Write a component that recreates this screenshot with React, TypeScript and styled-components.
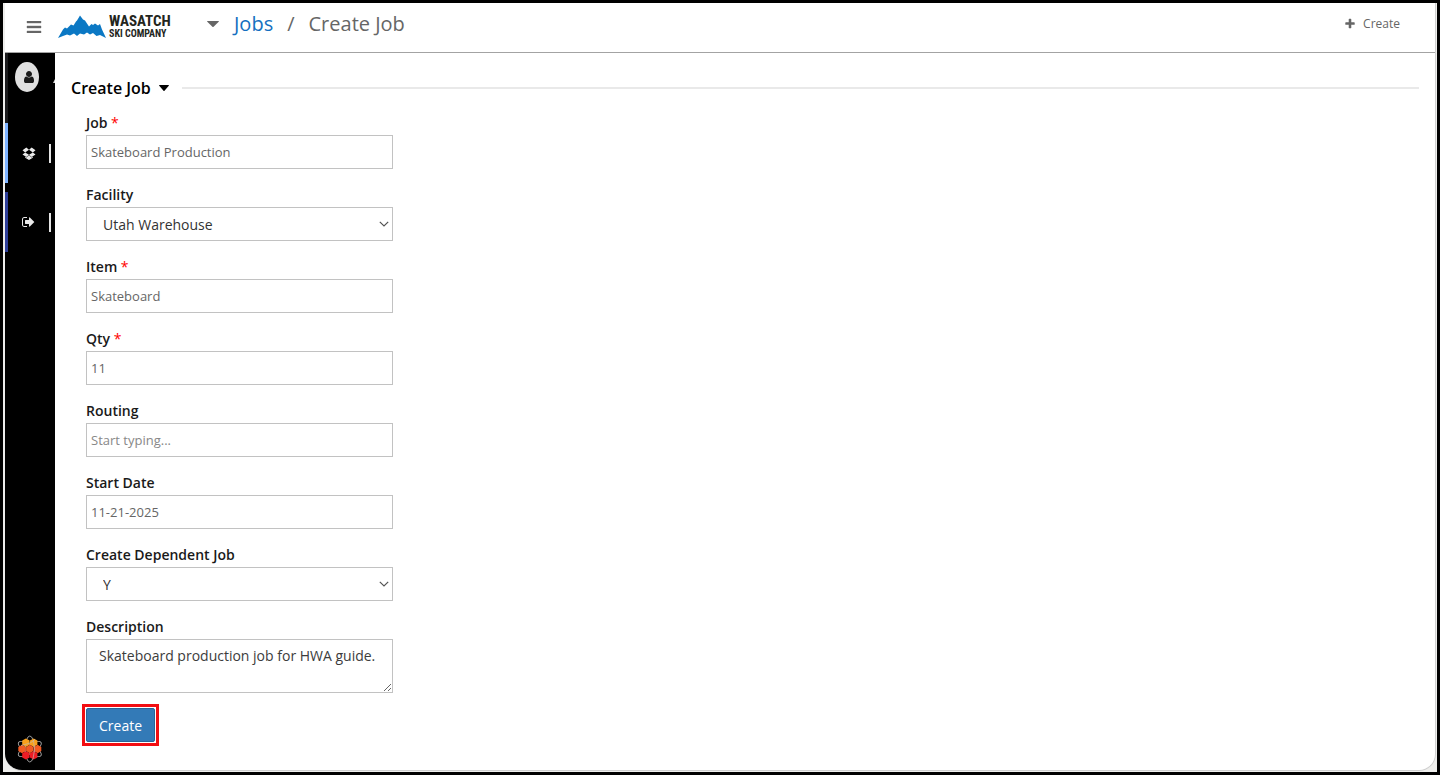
import React from "react";
import styled, { createGlobalStyle, css } from "styled-components";

const GlobalStyle = createGlobalStyle`
  *, *::before, *::after { box-sizing: border-box; }
  body {
    margin: 0;
    background: #000;
    color: #1a1a1a;
    font-family: "Open Sans", "Noto Sans", sans-serif;
    font-size: 14px;
    line-height: 20px;
  }
  button, input, select, textarea { font-family: inherit; }
`;

const Frame = styled.div`
  display: flex;
  min-height: 100vh;
  border: 3px solid #000;
  padding: 0 1px 1px 2px;
  background: #eeeeec;
`;

const Window = styled.div`
  flex: 1;
  min-width: 0;
  display: flex;
  flex-direction: column;
  overflow: hidden;
  background: #fff;
  border: solid #cfcfcf;
  border-width: 0 1px 1px 0;
  border-radius: 0 0 17px 17px;
`;

const Header = styled.header`
  display: flex;
  align-items: center;
  height: 50px;
  padding: 0 35px 7px 21px;
  border-bottom: 1px solid #a3a3a3;
`;

const IconButton = styled.button`
  display: flex;
  align-items: center;
  gap: 7px;
  padding: 0;
  border: 0;
  background: none;
  color: #666;
  font-size: 12px;
  line-height: 20px;
  cursor: pointer;
`;

const MenuButton = styled(IconButton)`
  padding-top: 6px;
`;

const Brand = styled.a`
  display: flex;
  align-items: center;
  gap: 3px;
  width: 111px;
  margin-left: 16px;
  padding-top: 4px;
  color: #23251c;
  text-decoration: none;

  svg { flex: none; }
`;

const BrandName = styled.span`
  display: flex;
  flex-direction: column;
  font-family: "Roboto Condensed", Roboto, sans-serif;
  font-weight: 700;
  white-space: nowrap;
`;

const BrandTop = styled.span`
  font-size: 15px;
  line-height: 14px;
`;

const BrandBottom = styled.span`
  font-size: 10px;
  line-height: 11px;
`;

const Breadcrumb = styled.nav`
  display: flex;
  align-items: center;
  gap: 14px;
  margin-left: 38px;
  color: #666;
  font-size: 20px;
  line-height: 28px;

  a {
    margin-left: 1px;
    color: #146fc0;
    text-decoration: none;
  }
`;

const HeaderActions = styled.div`
  margin-left: auto;
`;

const Body = styled.div`
  flex: 1;
  display: flex;
`;

const Sidebar = styled.aside`
  display: flex;
  flex-direction: column;
  flex: none;
  width: 50px;
  background: #000;
  color: #e9e9e9;
`;

const Profile = styled.a`
  position: relative;
  display: flex;
  align-items: flex-start;
  height: 70px;
  padding: 9px 0 0 7px;
  border-left: 3px solid #1b1b1d;
`;

const Avatar = styled.span`
  display: flex;
  align-items: center;
  justify-content: center;
  width: 24px;
  height: 30px;
  padding-left: 3px;
  border-radius: 50%;
  background: #e0e0e0;
  color: #1b1b1b;
`;

const ProfileEdge = styled.svg`
  position: absolute;
  right: 0;
  top: 26px;
`;

const SideLink = styled.a<{ $accent: string }>`
  display: flex;
  align-items: center;
  justify-content: space-between;
  height: 60px;
  margin-bottom: 9px;
  padding: 0 4px 0 14px;
  border-left: 3px solid ${(p) => p.$accent};
  color: inherit;

  &::after {
    content: "";
    width: 2px;
    height: 19px;
    background: #e4e4e4;
  }
`;

const SideFooter = styled.div`
  display: flex;
  margin-top: auto;
  padding: 0 0 7px 12px;
`;

const Main = styled.main`
  flex: 1;
  min-width: 0;
  padding: 25px 16px 24px;
`;

const SectionHead = styled.div`
  display: flex;
  align-items: center;
  gap: 13px;

  &::after {
    content: "";
    flex: 1;
    height: 2px;
    background: #e9e9e9;
  }
`;

const SectionTitle = styled.h1`
  display: flex;
  align-items: center;
  gap: 8px;
  margin: 0;
  color: #000;
  font-size: 16px;
  font-weight: 600;
  line-height: 20px;
`;

const Form = styled.form`
  display: flex;
  flex-direction: column;
  align-items: flex-start;
  gap: 16px;
  padding: 15px 15px 0;
`;

const Field = styled.div`
  display: flex;
  flex-direction: column;
  gap: 2px;
  width: 100%;
  max-width: 307px;

  label { font-weight: 600; }
`;

const Required = styled.span`
  color: #f00;
  font-weight: 400;
`;

const control = css`
  display: block;
  width: 100%;
  height: 34px;
  border: 1px solid #c2c2c2;
  border-radius: 0;
  background: #fff;
  outline: none;
`;

const TextInput = styled.input`
  ${control}
  padding: 0 4px;
  color: #666;
  font-size: 13px;

  &::placeholder { color: #888; opacity: 1; }
`;

const SelectBox = styled.div`
  position: relative;

  select {
    ${control}
    appearance: none;
    padding: 1px 24px 0 16px;
    color: #333;
    font-size: 14px;
  }

  svg {
    position: absolute;
    right: 4px;
    top: 14px;
    pointer-events: none;
  }
`;

const TextArea = styled.textarea`
  ${control}
  height: 54px;
  padding: 6px 12px;
  color: #3c3c3c;
  font-size: 14px;
  line-height: 20px;
  resize: vertical;
`;

const SubmitHighlight = styled.div`
  margin: -5px 0 0 -4px;
  padding: 1px;
  border: 3px solid #f20d12;
`;

const SubmitButton = styled.button`
  display: block;
  height: 34px;
  padding: 0 12px;
  border: 1px solid #2a6496;
  border-radius: 2px;
  background: #337ab7;
  color: #fff;
  font-size: 14px;
  cursor: pointer;
`;

const glyphs = {
  user: "M1536 1399q0 109-62.5 187t-150.5 78h-854q-88 0-150.5-78t-62.5-187q0-85 8.5-160.5t31.5-152 58.5-131 94-89 134.5-34.5q131 128 313 128t313-128q76 0 134.5 34.5t94 89 58.5 131 31.5 152 8.5 160.5zm-256-887q0 159-112.5 271.5t-271.5 112.5-271.5-112.5-112.5-271.5 112.5-271.5 271.5-112.5 271.5 112.5 112.5 271.5z",
  plus: "M1600 736v192q0 40-28 68t-68 28h-416v416q0 40-28 68t-68 28h-192q-40 0-68-28t-28-68v-416h-416q-40 0-68-28t-28-68v-192q0-40 28-68t68-28h416v-416q0-40 28-68t68-28h192q40 0 68 28t28 68v416h416q40 0 68 28t28 68z",
  signOut:
    "M640 1440q0 4 1 20t.5 26.5-3 23.5-10 19.5-20.5 6.5h-320q-119 0-203.5-84.5t-84.5-203.5v-704q0-119 84.5-203.5t203.5-84.5h320q13 0 22.5 9.5t9.5 22.5q0 4 1 20t.5 26.5-3 23.5-10 19.5-20.5 6.5h-320q-66 0-113 47t-47 113v704q0 66 47 113t113 47h312l11.5 1 11.5 3 8 5.5 7 9 2 13.5zm928-544q0 26-19 45l-544 544q-19 19-45 19t-45-19-19-45v-288h-448q-26 0-45-19t-19-45v-384q0-26 19-45t45-19h448v-288q0-26 19-45t45-19 45 19l544 544q19 19 19 45z",
  dropbox:
    "M402 829l494 305-342 285-490-319zM1390 829l338 271-490 319-342-285zM554 207l342 285-494 337-338-271zM1238 207l490 351-338 271-494-337zM1388 1384v108l-492 293-490-293v-108l148 96 342-284 342 284z",
};

function Glyph({ name, size }: { name: keyof typeof glyphs; size: number }) {
  return (
    <svg width={size} height={size} viewBox="0 0 1792 1792" fill="currentColor" aria-hidden="true">
      <path d={glyphs[name]} />
    </svg>
  );
}

function Caret({ width }: { width: number }) {
  return (
    <svg width={width} height="6" viewBox="0 0 12 6" preserveAspectRatio="none" aria-hidden="true">
      <path d="M.6 0h10.8q.9 0 .3.7L6.6 5.7q-.6.5-1.2 0L.3.7Q-.3 0 .6 0z" fill="currentColor" />
    </svg>
  );
}

function Mountains() {
  return (
    <svg width="48" height="23" viewBox="0 0 48 23" aria-hidden="true">
      <path
        fill="#0b78c4"
        d="M0 23L5 14.5 7 12.5 9 13.5 13 9.5 15.5 10.5 18 6.5 19 5.5 22 0.5 25 4.5 27 5.5 31 11.5 33.5 9 35 10 37 8.5 40 10.5 42 9 44 14.5 48 23 42 20 38.5 21 35 18 32 19.5 29 17.5 26 19.5 22 18.5 19 21 16 18.5 12 20.5 9 19.5 5 21z"
      />
    </svg>
  );
}

function HoneycombAtom() {
  const hex = (x: number, y: number) =>
    `M${x} ${y - 4.2}l3.7 2.1v4.2l-3.7 2.1-3.7-2.1v-4.2z`;
  const orbits = [0, 60, -60].map((angle) => (
    <ellipse key={angle} cx="12.8" cy="14" rx="4.6" ry="13" transform={`rotate(${angle} 12.8 14)`} />
  ));
  return (
    <svg width="26" height="28" viewBox="0 0 26 28" aria-hidden="true">
      <g fill="none" stroke="#a8a8a8" strokeWidth=".9">{orbits}</g>
      <path d={hex(8.9, 7.6) + hex(16.7, 7.6)} fill="#f9a01b" />
      <path d={hex(5, 14) + hex(12.8, 14) + hex(20.6, 14)} fill="#f15a22" />
      <path d={hex(8.9, 20.4) + hex(16.7, 20.4)} fill="#ed1c24" />
      <path d="M4 10.5Q16 8 18 4M16.4 5Q19 14 16 24" fill="none" stroke="#b9b9b9" strokeWidth=".8" opacity=".8" />
    </svg>
  );
}

type FieldSpec = {
  id: string;
  label: string;
  required?: boolean;
  value?: string;
  placeholder?: string;
  options?: string[];
};

const fields: FieldSpec[] = [
  { id: "job", label: "Job", required: true, value: "Skateboard Production" },
  { id: "facility", label: "Facility", options: ["Utah Warehouse"] },
  { id: "item", label: "Item", required: true, value: "Skateboard" },
  { id: "qty", label: "Qty", required: true, value: "11" },
  { id: "routing", label: "Routing", placeholder: "Start typing..." },
  { id: "start-date", label: "Start Date", value: "11-21-2025" },
  { id: "dependent", label: "Create Dependent Job", options: ["Y", "N"] },
];

function FormField({ id, label, required, value, placeholder, options }: FieldSpec) {
  return (
    <Field>
      <label htmlFor={id}>
        {label}
        {required && <Required> *</Required>}
      </label>
      {options ? (
        <SelectBox>
          <select id={id} defaultValue={options[0]}>
            {options.map((option) => (
              <option key={option}>{option}</option>
            ))}
          </select>
          <svg width="10" height="6" viewBox="0 0 10 6" fill="none" stroke="#555" strokeWidth="1.2" aria-hidden="true">
            <path d="M.8.8L5 5 9.2.8" />
          </svg>
        </SelectBox>
      ) : (
        <TextInput id={id} type="text" defaultValue={value} placeholder={placeholder} />
      )}
    </Field>
  );
}

export default function App() {
  return (
    <>
      <GlobalStyle />
      <Frame>
        <Window>
          <Header>
            <MenuButton type="button" aria-label="Menu">
              <svg width="16" height="12" viewBox="0 0 16 12" aria-hidden="true">
                <path d="M1 0h14v2H1zM1 5h14v2H1zM1 10h14v2H1z" fill="currentColor" stroke="currentColor" strokeWidth=".4" />
              </svg>
            </MenuButton>
            <Brand href="#home">
              <Mountains />
              <BrandName>
                <BrandTop>WASATCH</BrandTop>
                <BrandBottom>SKI COMPANY</BrandBottom>
              </BrandName>
            </Brand>
            <Breadcrumb aria-label="Breadcrumb">
              <IconButton type="button" aria-label="Recent pages">
                <Caret width={12} />
              </IconButton>
              <a href="#jobs">Jobs</a>
              <span>/</span>
              <span>Create Job</span>
            </Breadcrumb>
            <HeaderActions>
              <IconButton type="button">
                <Glyph name="plus" size={12} />
                Create
              </IconButton>
            </HeaderActions>
          </Header>
          <Body>
            <Sidebar>
              <Profile href="#profile" aria-label="Profile">
                <Avatar>
                  <Glyph name="user" size={14} />
                </Avatar>
                <ProfileEdge width="2" height="4" viewBox="0 0 2 4" aria-hidden="true">
                  <path d="M2 0v4H0z" fill="#ddd" />
                </ProfileEdge>
              </Profile>
              <SideLink href="#inventory" aria-label="Inventory" $accent="#7db2ff">
                <Glyph name="dropbox" size={14} />
              </SideLink>
              <SideLink href="#logout" aria-label="Log out" $accent="#2d3e98">
                <Glyph name="signOut" size={14} />
              </SideLink>
              <SideFooter>
                <HoneycombAtom />
              </SideFooter>
            </Sidebar>
            <Main>
              <SectionHead>
                <SectionTitle>
                  Create Job
                  <Caret width={10} />
                </SectionTitle>
              </SectionHead>
              <Form onSubmit={(event) => event.preventDefault()}>
                {fields.map((field) => (
                  <FormField key={field.id} {...field} />
                ))}
                <Field>
                  <label htmlFor="description">Description</label>
                  <TextArea id="description" defaultValue="Skateboard production job for HWA guide." />
                </Field>
                <SubmitHighlight>
                  <SubmitButton type="submit">Create</SubmitButton>
                </SubmitHighlight>
              </Form>
            </Main>
          </Body>
        </Window>
      </Frame>
    </>
  );
}
